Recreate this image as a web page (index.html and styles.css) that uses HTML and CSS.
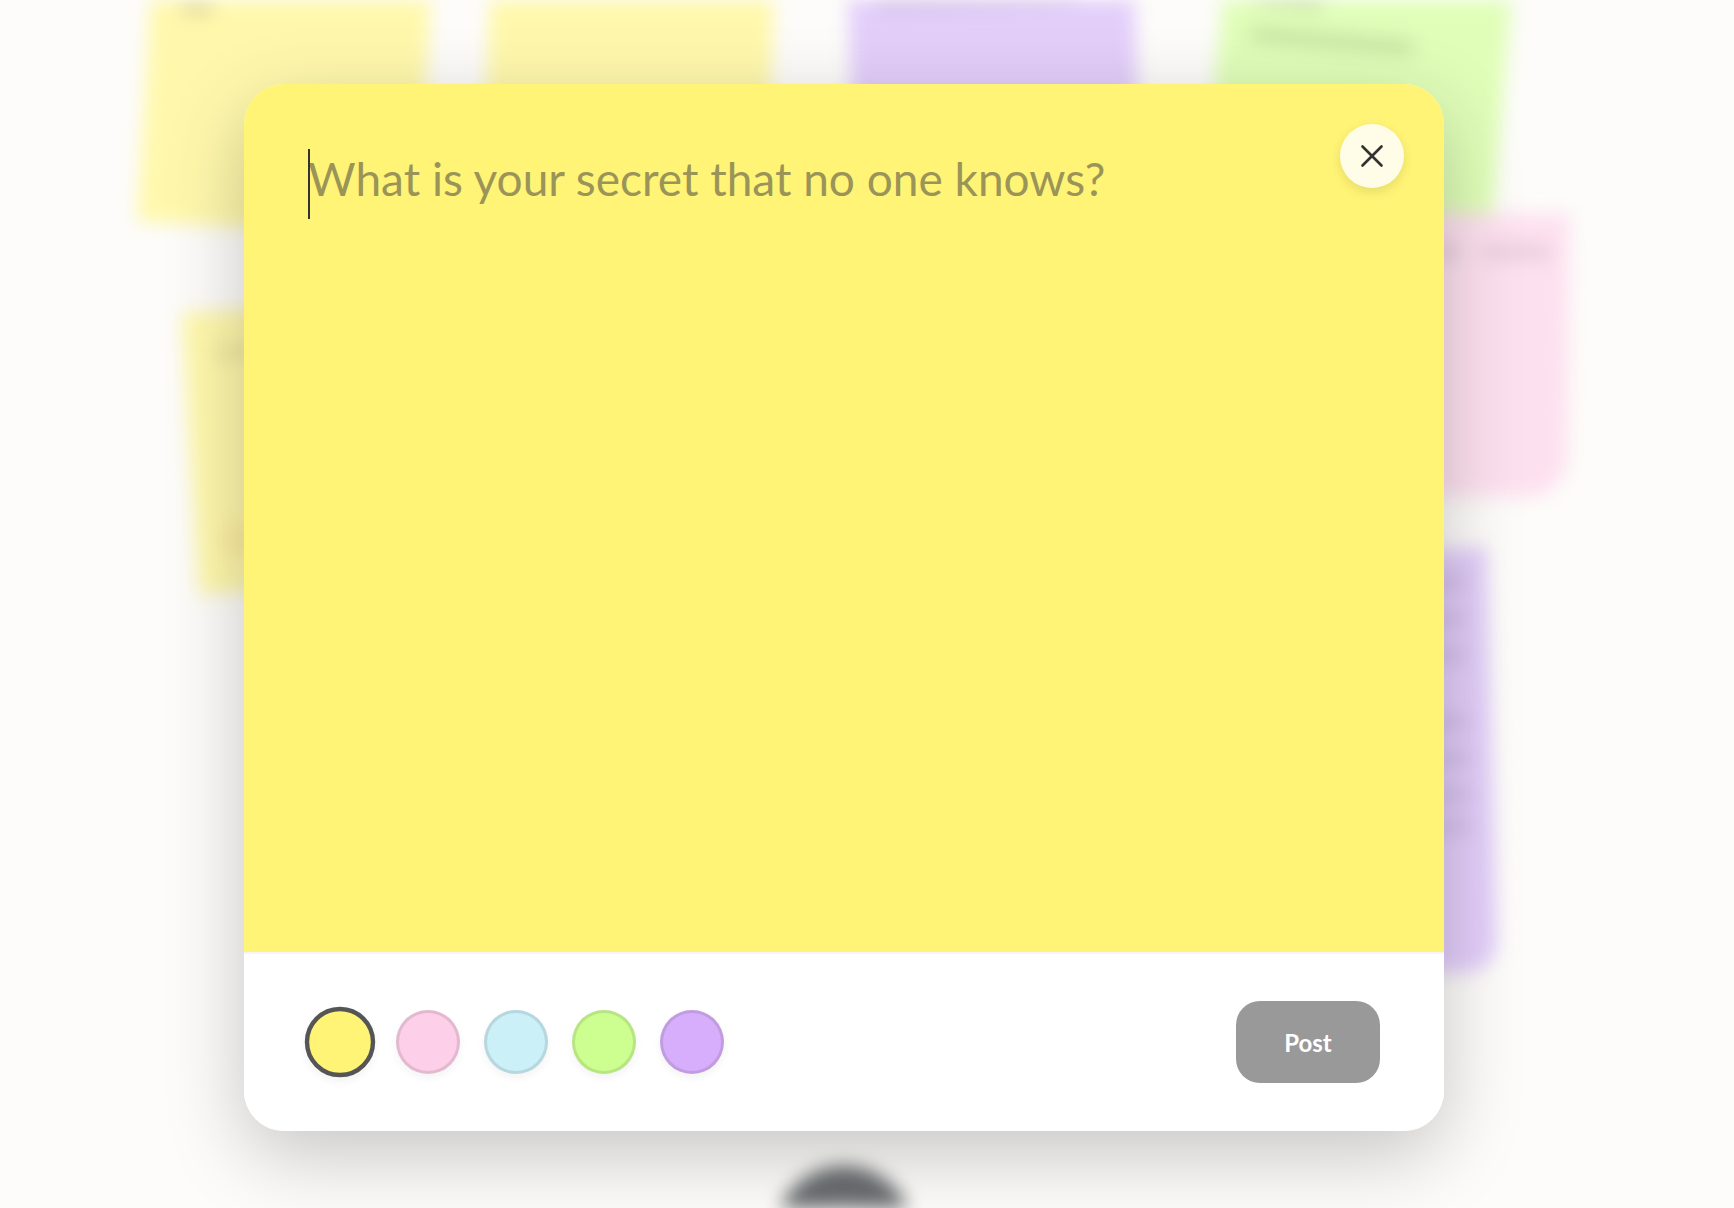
FILE: index.html
```html
<!DOCTYPE html>
<html lang="en">
<head>
<meta charset="utf-8">
<title>Secret wall</title>
<link rel="stylesheet" href="styles.css">
</head>
<body>
<div class="board">
  <div class="note note-a yellow"><i class="blob blob-a1"></i></div>
  <div class="note note-b yellow"></div>
  <div class="note note-c purple"><i class="blob blob-c1"></i></div>
  <div class="note note-d green"><i class="blob blob-d1"></i><i class="blob blob-d2"></i></div>
  <div class="note note-e pink"><i class="blob blob-e1"></i><i class="blob blob-e2"></i></div>
  <div class="note note-f purple">
    <i class="blob line l1"></i><i class="blob line l2"></i><i class="blob line l3"></i><i class="blob line l4"></i>
    <i class="blob line l5"></i><i class="blob line l6"></i><i class="blob line l7"></i>
  </div>
  <div class="note note-g yellow"><i class="blob blob-g1"></i><i class="blob blob-g2"></i></div>
  <div class="fab"><i class="fab-plus"></i></div>
</div>
<div class="overlay">
  <section class="modal">
    <div class="editor">
      <div class="prompt"><span class="caret"></span>What is your secret that no one knows?</div>
      <button class="close" type="button" aria-label="Close">
        <svg viewBox="0 0 24 24" width="24" height="24" fill="none" stroke="#333" stroke-width="2.7" stroke-linecap="round"><path d="M2.5 2.5 21.5 21.5M21.5 2.5 2.5 21.5"/></svg>
      </button>
    </div>
    <div class="footer">
      <div class="swatches">
        <span class="swatch sw-yellow selected"></span>
        <span class="swatch sw-pink"></span>
        <span class="swatch sw-blue"></span>
        <span class="swatch sw-green"></span>
        <span class="swatch sw-purple"></span>
      </div>
      <button class="post" type="button">Post</button>
    </div>
  </section>
</div>
</body>
</html>
```
FILE: styles.css
```css
* { box-sizing: border-box; }
html, body { margin: 0; height: 100%; overflow: hidden; background: #fdfcfa; }
body { position: relative; width: 1734px; height: 1208px; font-family: "Lato", sans-serif; }

.board { position: absolute; inset: 0; filter: blur(9px); overflow: hidden; }
.note { position: absolute; }
.yellow { background: #fff8ac; }
.purple { background: #e3cefa; }
.green { background: #e0feb8; }
.pink { background: #fde0ef; }
.note-a { left: 146px; top: -70px; width: 280px; height: 300px; transform: rotate(3.4deg); }
.note-b { left: 488px; top: -100px; width: 284px; height: 300px; transform: rotate(2deg); }
.note-c { left: 850px; top: -100px; width: 286px; height: 300px; transform: rotate(-2deg); }
.note-d { left: 1215px; top: -60px; width: 288px; height: 304px; transform: rotate(5deg); border-radius: 0 0 30px 0; }
.note-e { left: 1290px; top: 213px; width: 278px; height: 283px; transform: rotate(.5deg); border-radius: 0 0 40px 0; }
.note-f { left: 1210px; top: 551px; width: 282px; height: 424px; transform: rotate(-1.5deg); border-radius: 0 0 30px 0; }
.note-g { left: 190px; top: 304px; width: 285px; height: 282px; transform: rotate(-3.5deg); }

.blob { position: absolute; display: block; background: rgba(80, 70, 60, .16); height: 13px; border-radius: 6px; }
.blob-a1 { left: 30px; top: 78px; width: 34px; }
.blob-c1 { left: 28px; top: 96px; width: 200px; background: rgba(80, 60, 100, .1); }
.blob-d1 { left: 30px; top: 62px; width: 70px; background: rgba(80, 90, 60, .18); }
.blob-d2 { left: 30px; top: 97px; width: 165px; background: rgba(80, 90, 60, .18); }
.blob-e1 { left: 40px; top: 32px; width: 130px; background: rgba(80, 60, 70, .12); }
.blob-e2 { left: 190px; top: 32px; width: 70px; background: rgba(80, 60, 70, .12); }
.line { left: 90px; width: 170px; background: rgba(80, 60, 100, .12); }
.l1 { top: 28px; } .l2 { top: 64px; } .l3 { top: 100px; } .l4 { top: 168px; }
.l5 { top: 204px; } .l6 { top: 240px; } .l7 { top: 272px; }
.blob-g1 { left: 30px; top: 36px; width: 60px; background: rgba(80, 80, 60, .1); }
.blob-g2 { left: 30px; top: 212px; width: 22px; height: 34px; background: rgba(240, 150, 60, .12); }
.fab { position: absolute; left: 774px; top: 1166px; width: 140px; height: 140px; border-radius: 50%; background: #6a6d70; }
.fab-plus { position: absolute; left: 60px; top: 38px; width: 20px; height: 20px; border-radius: 50%; background: #8a8c8e; }

.overlay { position: absolute; inset: 0; padding: 84px 46px 0 0; display: flex; justify-content: center; align-items: flex-start; }
.modal { width: 1200px; height: 1047px; display: flex; flex-direction: column; border-radius: 40px; overflow: hidden; background: #fff; box-shadow: 0 24px 80px rgba(0, 0, 0, .22); }
.editor { position: relative; flex: 1; background: #fff475; padding: 64px; }
.prompt { position: relative; font-size: 46px; font-weight: 400; line-height: 62px; color: #9b9459; white-space: nowrap; }
.caret { position: absolute; left: 0; top: 1px; width: 2px; height: 70px; background: #333; }
.close { position: absolute; top: 40px; right: 40px; width: 64px; height: 64px; padding: 0; border: 0; border-radius: 50%; background: #fffde7; display: flex; align-items: center; justify-content: center; box-shadow: 0 4px 12px rgba(0, 0, 0, .1); }

.footer { height: 179px; border-top: 2px solid #f5f5f5; background: #fff; padding: 47px 64px 48px; display: flex; align-items: center; justify-content: space-between; }
.swatches { display: flex; gap: 24px; }
.swatch { width: 64px; height: 64px; border-radius: 50%; border: 3px solid rgba(0, 0, 0, .1); box-shadow: 0 4px 8px rgba(0, 0, 0, .05); }
.swatch.selected { border: 4px solid #555; transform: scale(1.1); }
.sw-yellow { background: #fff475; }
.sw-pink { background: #fdcfe8; }
.sw-blue { background: #cbf0f8; }
.sw-green { background: #ccff90; }
.sw-purple { background: #d7aefb; }
.post { width: 144px; height: 82px; border: 0; border-radius: 24px; background: #999; color: #fff; font-family: "Lato", sans-serif; font-size: 24px; font-weight: 700; }
```
